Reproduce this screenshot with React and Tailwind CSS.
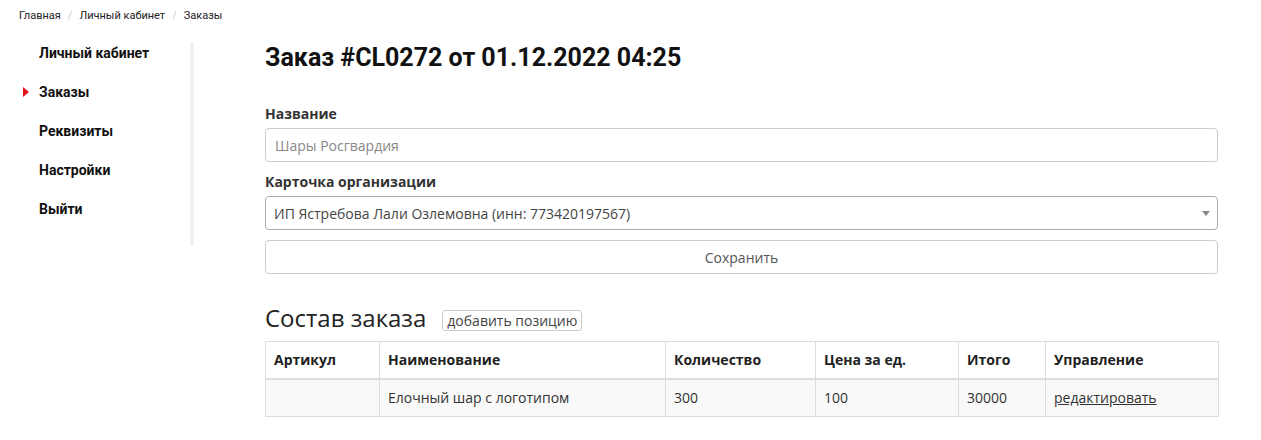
export default function App() {
  const menu = ["Личный кабинет", "Заказы", "Реквизиты", "Настройки", "Выйти"];
  return (
    <div className="w-[1261px] h-[440px] bg-white text-[#333] font-['Open_Sans',sans-serif] overflow-hidden">
      <div className="h-[32px] pl-[19px] flex items-center text-[11px] font-['Roboto',sans-serif] text-[#222]">
        <span>Главная</span>
        <span className="px-[7px] text-[#ccc]">/</span>
        <span>Личный кабинет</span>
        <span className="px-[7px] text-[#ccc]">/</span>
        <span>Заказы</span>
      </div>
      <div className="flex items-start">
        <div className="mt-[10px] w-[194px] border-r-4 border-[#f2f2f2] pt-[1px] pb-[27px] flex flex-col gap-[19px] font-['Roboto',sans-serif] text-[14px] font-bold text-[#111]">
          {menu.map((m, i) => (
            <div key={m} className="relative pl-[39px] leading-[20px]">
              {i === 1 && (
                <span className="absolute left-[23px] top-[5px] w-0 h-0 border-y-[5px] border-y-transparent border-l-[6px] border-l-[#e3121b]" />
              )}
              {m}
            </div>
          ))}
        </div>
        <div className="ml-[71px] w-[953px]">
          <h1 className="mt-[10px] leading-[32px] text-[25px] font-bold font-['Roboto',sans-serif] text-[#111]">
            Заказ #CL0272 от 01.12.2022 04:25
          </h1>
          <div className="mt-[30px] leading-[20px] text-[14px] font-bold">Название</div>
          <div className="mt-[4px] h-[34px] border border-[#ccc] rounded-[4px] px-[9px] flex items-center text-[14px] text-[#888]">
            Шары Росгвардия
          </div>
          <div className="mt-[10px] leading-[20px] text-[14px] font-bold">Карточка организации</div>
          <div className="mt-[4px] h-[34px] border border-[#aaa] rounded-[4px] pl-[8px] pr-[7px] flex items-center justify-between text-[14px] text-[#444]">
            <span>ИП Ястребова Лали Озлемовна (инн: 773420197567)</span>
            <span className="w-0 h-0 border-x-[4px] border-x-transparent border-t-[5px] border-t-[#888]" />
          </div>
          <div className="mt-[10px] h-[34px] border border-[#ccc] rounded-[4px] flex items-center justify-center text-[14px] text-[#555]">
            Сохранить
          </div>
          <div className="mt-[29px] flex items-center">
            <span className="text-[24px] leading-[30px] text-[#222]">Состав заказа</span>
            <span className="ml-[16px] mt-[4px] h-[21px] px-[4px] border border-[#ccc] rounded-[3px] flex items-center text-[14px] text-[#444]">
              добавить позицию
            </span>
          </div>
          <table className="mt-[8px] w-full table-fixed border-collapse text-[14px]">
            <colgroup>
              <col className="w-[114px]" />
              <col className="w-[286px]" />
              <col className="w-[150px]" />
              <col className="w-[143px]" />
              <col className="w-[87px]" />
              <col className="w-[173px]" />
            </colgroup>
            <thead>
              <tr>
                {["Артикул", "Наименование", "Количество", "Цена за ед.", "Итого", "Управление"].map((h) => (
                  <th key={h} className="text-left font-bold leading-[20px] px-[8px] py-[8px] border border-[#ddd] border-b-2 text-[#222]">
                    {h}
                  </th>
                ))}
              </tr>
            </thead>
            <tbody>
              <tr className="bg-[#f9f9f9]">
                <td className="px-[8px] py-[8px] leading-[20px] border border-[#ddd]"></td>
                <td className="px-[8px] py-[8px] leading-[20px] border border-[#ddd]">Елочный шар с логотипом</td>
                <td className="px-[8px] py-[8px] leading-[20px] border border-[#ddd]">300</td>
                <td className="px-[8px] py-[8px] leading-[20px] border border-[#ddd]">100</td>
                <td className="px-[8px] py-[8px] leading-[20px] border border-[#ddd]">30000</td>
                <td className="px-[8px] py-[8px] leading-[20px] border border-[#ddd]">
                  <span className="underline text-[#333]">редактировать</span>
                </td>
              </tr>
            </tbody>
          </table>
        </div>
      </div>
    </div>
  );
}
